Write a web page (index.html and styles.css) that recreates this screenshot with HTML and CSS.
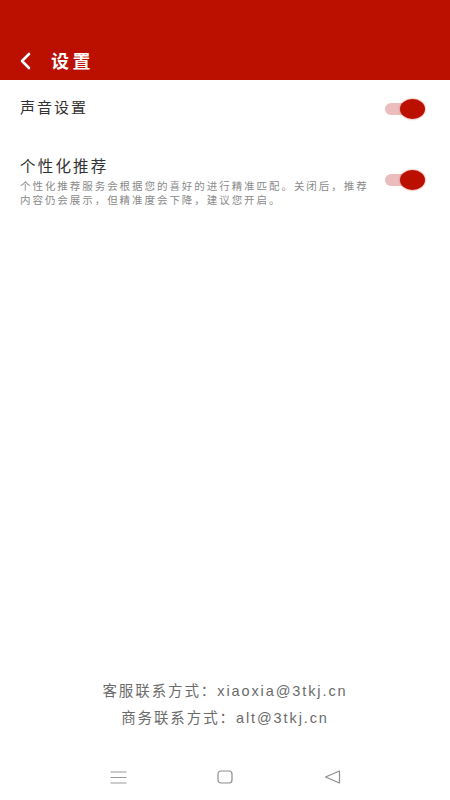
FILE: index.html
```html
<!DOCTYPE html>
<html lang="zh-CN">
<head>
<meta charset="utf-8">
<title>设置</title>
<link rel="stylesheet" href="styles.css">
</head>
<body>
<div class="page">
  <header class="header">
    <div class="bar">
      <svg class="back" width="14" height="18" viewBox="0 0 14 18"><path d="M11 2 L4 9 L11 16" fill="none" stroke="#fff" stroke-width="2.6" stroke-linecap="round" stroke-linejoin="round"/></svg>
      <h1 class="title">设置</h1>
    </div>
  </header>
  <main class="main">
    <div class="row row-sound">
      <div class="row-text">
        <div class="row-title">声音设置</div>
      </div>
      <div class="toggle"><span class="track"></span><span class="thumb"></span></div>
    </div>
    <div class="row row-rec">
      <div class="row-text">
        <div class="row-title">个性化推荐</div>
        <div class="row-desc">个性化推荐服务会根据您的喜好的进行精准匹配。关闭后，推荐内容仍会展示，但精准度会下降，建议您开启。</div>
      </div>
      <div class="toggle"><span class="track"></span><span class="thumb"></span></div>
    </div>
  </main>
  <footer class="footer">
    <p class="contact">客服联系方式：xiaoxia@3tkj.cn</p>
    <p class="contact">商务联系方式：alt@3tkj.cn</p>
  </footer>
  <nav class="navbar">
    <div class="nav-cell">
      <svg width="17" height="13" viewBox="0 0 17 13"><path d="M0.5 1 H16.5 M0.5 6.5 H16.5 M0.5 12 H16.5" stroke="#9a9a9a" stroke-width="1.1" fill="none"/></svg>
    </div>
    <div class="nav-cell">
      <svg width="16" height="14" viewBox="0 0 16 14"><rect x="1" y="1" width="14" height="12" rx="3" ry="3" stroke="#8e8e8e" stroke-width="1.2" fill="none"/></svg>
    </div>
    <div class="nav-cell">
      <svg width="17" height="14" viewBox="0 0 17 14"><path d="M15.5 1 L1.5 7 L15.5 13 Z" stroke="#8e8e8e" stroke-width="1.2" stroke-linejoin="round" fill="none"/></svg>
    </div>
  </nav>
</div>
</body>
</html>
```

FILE: styles.css
```css
* {
  box-sizing: border-box;
}

html, body {
  margin: 0;
  padding: 0;
  background: #ffffff;
}

body {
  font-family: "Noto Sans CJK SC", "Noto Sans", "Liberation Sans", sans-serif;
  color: #333333;
}

.page {
  width: 450px;
  min-height: 800px;
  display: flex;
  flex-direction: column;
}

.header {
  height: 80px;
  background: #bb1000;
  padding-top: 40px;
}

.bar {
  height: 40px;
  display: flex;
  align-items: center;
  padding-left: 18px;
}

.back {
  display: block;
  margin-top: 1px;
}

.title {
  margin: 0 0 0 19px;
  color: #ffffff;
  font-size: 18px;
  font-weight: 700;
  letter-spacing: 3.5px;
  line-height: 24px;
}

.main {
  flex: 1;
}

.row {
  display: flex;
  align-items: center;
  justify-content: space-between;
  padding: 0 25px 0 20px;
}

.row-sound {
  height: 58px;
}

.row-rec {
  padding-top: 16px;
}

.row-text {
  flex: 0 0 auto;
}

.row-sound .row-text {
  margin-bottom: 4px;
}

.row-title {
  font-size: 15px;
  letter-spacing: 2px;
  line-height: 22px;
  color: #333333;
}

.row-rec .row-title {
  font-size: 15.5px;
  letter-spacing: 2.2px;
  margin-bottom: 3px;
}

.row-desc {
  width: 352px;
  font-size: 10.5px;
  letter-spacing: 1.95px;
  line-height: 13.5px;
  color: #8a8a8a;
}

.toggle {
  position: relative;
  width: 40px;
  height: 22px;
  flex: 0 0 auto;
}

.track {
  position: absolute;
  left: 0;
  top: 5px;
  width: 30px;
  height: 12px;
  border-radius: 6px;
  background: #ebbdbd;
}

.thumb {
  position: absolute;
  right: 0;
  top: 1px;
  width: 25px;
  height: 20px;
  border-radius: 50%;
  background: #bb1000;
  box-shadow: 0 0 1.5px 0.5px rgba(187, 16, 0, 0.35);
}

.footer {
  text-align: center;
  margin-bottom: 22px;
}

.contact {
  margin: 0;
  font-family: "Liberation Sans", "Noto Sans CJK SC", sans-serif;
  font-size: 14.5px;
  letter-spacing: 1.9px;
  line-height: 27px;
  color: #6b6b6b;
}

.navbar {
  height: 46px;
  display: grid;
  grid-template-columns: 107px 107px 107px;
  justify-content: center;
  align-items: center;
}

.nav-cell {
  display: flex;
  justify-content: center;
  align-items: center;
}

.nav-cell svg {
  display: block;
}
```
